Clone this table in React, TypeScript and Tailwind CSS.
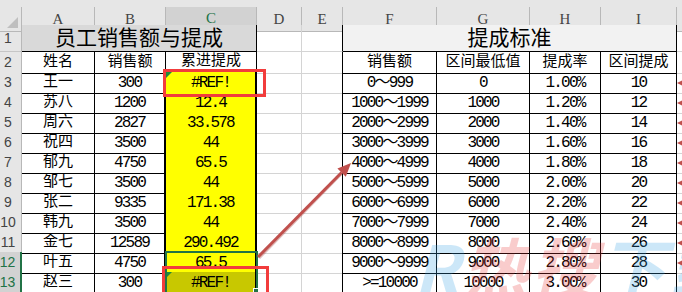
import React from 'react'

const COLS = 'grid grid-cols-[22px_73px_71px_91px_45px_41px_94px_93px_71px_76px_5px]'

const left = [
    ['王一', '300', '#REF!'],
    ['苏八', '1200', '12.4'],
    ['周六', '2827', '33.578'],
    ['祝四', '3500', '44'],
    ['郁九', '4750', '65.5'],
    ['邹七', '3500', '44'],
    ['张二', '9335', '171.38'],
    ['韩九', '3500', '44'],
    ['金七', '12589', '290.492'],
    ['叶五', '4750', '65.5'],
    ['赵三', '300', '#REF!'],
]

const right = [
    ['0～999', '0', '1.00%', '10'],
    ['1000～1999', '1000', '1.20%', '12'],
    ['2000～2999', '2000', '1.40%', '14'],
    ['3000～3999', '3000', '1.60%', '16'],
    ['4000～4999', '4000', '1.80%', '18'],
    ['5000～5999', '5000', '2.00%', '20'],
    ['6000～6999', '6000', '2.20%', '22'],
    ['7000～7999', '7000', '2.40%', '24'],
    ['8000～8999', '8000', '2.60%', '26'],
    ['9000～9999', '9000', '2.80%', '28'],
    ['>=10000', '10000', '3.00%', '30'],
]

const letters = ['A', 'B', 'C', 'D', 'E', 'F', 'G', 'H', 'I']

const cell = 'flex items-center justify-center pt-[1px] whitespace-nowrap overflow-hidden'
const num = 'text-[16px] tracking-[-1.8px]'
const grid = 'border-r border-b border-[#d4d4d4]'
const blk = 'border-r border-b border-black'

function RowHead({ n, active = false }: { n: number; active?: boolean }) {
    return (
        <div
            className={`flex items-center justify-center pr-[5px] border-b border-[#c6c6c6] font-['Liberation_Sans',sans-serif] text-[14px] ${
                active
                    ? 'bg-[#d2d2d2] text-[#217346] border-r-2 border-r-[#217346]'
                    : 'bg-[#e6e6e6] text-[#444] border-r border-r-[#b8b8b8]'
            }`}
        >
            {n}
        </div>
    )
}

export default function App() {
    return (
        <div className="relative w-[682px] h-[292px] overflow-hidden bg-white text-black font-['Liberation_Mono','Noto_Sans_CJK_SC',monospace] text-[15px]">
            <div className="h-[7px] bg-[#e6e6e6]" />

            {/* column headers */}
            <div className={`${COLS} h-[18px]`}>
                <div className="relative bg-[#e6e6e6] border-r border-b border-[#b8b8b8]">
                    <div className="absolute right-[3px] bottom-[3px] w-0 h-0 border-l-[11px] border-l-transparent border-b-[11px] border-b-[#bfbfbf]" />
                </div>
                {letters.map((l) => (
                    <div
                        key={l}
                        className={`flex items-center justify-center font-['Liberation_Serif',serif] text-[15px] border-r border-[#b8b8b8] ${
                            l === 'C'
                                ? 'bg-[#d2d2d2] text-[#217346] border-b-2 border-b-[#217346]'
                                : 'bg-[#e6e6e6] text-[#444] border-b border-b-[#b8b8b8]'
                        }`}
                    >
                        {l}
                    </div>
                ))}
                <div className="bg-[#e6e6e6] border-b border-[#b8b8b8]" />
            </div>

            {/* row 1 */}
            <div className={`${COLS} h-[27px]`}>
                <RowHead n={1} />
                <div className={`col-span-3 ${cell} pt-[3px] bg-[#d9d9d9] text-[21px] ${blk}`}>员工销售额与提成</div>
                <div className={grid} />
                <div className="border-r border-r-black border-b border-b-[#d4d4d4]" />
                <div className={`col-span-4 ${cell} pt-[3px] bg-[#f2f2f2] text-[21px] ${blk}`}>提成标准</div>
                <div className="border-b border-[#d4d4d4]" />
            </div>

            {/* row 2 */}
            <div className={`${COLS} h-[20px]`}>
                <RowHead n={2} />
                <div className={`${cell} ${blk}`}>姓名</div>
                <div className={`${cell} ${blk}`}>销售额</div>
                <div className={`${cell} border-r border-black border-b-2`}>累进提成</div>
                <div className={grid} />
                <div className="border-r border-r-black border-b border-b-[#d4d4d4]" />
                <div className={`${cell} ${blk}`}>销售额</div>
                <div className={`${cell} ${blk}`}>区间最低值</div>
                <div className={`${cell} ${blk}`}>提成率</div>
                <div className={`${cell} ${blk}`}>区间提成</div>
                <div className="border-b border-[#d4d4d4]" />
            </div>

            {left.map((r, i) => {
                const n = i + 3
                const sel = n >= 12
                const last = n === 13
                return (
                    <div key={n} className={`${COLS} ${last ? 'h-[21px]' : 'h-[20px]'}`}>
                        <RowHead n={n} active={sel} />
                        <div className={`${cell} ${blk}`}>{r[0]}</div>
                        <div className={`${cell} ${num} border-b border-black border-r-2`}>{r[1]}</div>
                        <div
                            className={`relative ${cell} ${num} border-r-2 border-b-2 border-black ${
                                last ? 'bg-[#c8c800]' : 'bg-[#ffff00]'
                            }`}
                        >
                            {r[2] === '#REF!' && (
                                <div className="absolute left-0 top-0 w-0 h-0 border-t-[6px] border-t-[#1e8a3c] border-r-[6px] border-r-transparent" />
                            )}
                            {r[2]}
                        </div>
                        <div className={grid} />
                        <div className="border-r border-r-black border-b border-b-[#d4d4d4]" />
                        <div className={`${cell} ${num} ${blk}`}>{right[i][0]}</div>
                        <div className={`${cell} ${num} ${blk}`}>{right[i][1]}</div>
                        <div className={`${cell} ${num} ${blk}`}>{right[i][2]}</div>
                        <div className={`${cell} ${num} ${blk}`}>{right[i][3]}</div>
                        <div className="border-b border-[#d4d4d4]" />
                    </div>
                )
            })}

            {/* selection C12:C13 */}
            <div className="absolute left-[165px] top-[251px] w-[93px] h-[45px] border-2 border-[#217346] pointer-events-none" />
            <div className="absolute left-[253px] top-[288px] w-[6px] h-[6px] bg-[#217346] border border-white" />

            {/* red highlight boxes */}
            <div className="absolute left-[163px] top-[69px] w-[103px] h-[28px] border-[3px] border-[#f23c3c] pointer-events-none" />
            <div className="absolute left-[162px] top-[266px] w-[107px] h-[40px] border-[3px] border-[#f23c3c] pointer-events-none" />

            {/* watermark */}
            <div className="absolute left-[414px] top-[232px] w-[320px] whitespace-nowrap text-[66px] leading-none font-bold italic tracking-[3px] opacity-25 pointer-events-none font-['Noto_Sans_CJK_SC',sans-serif]">
                <span className="text-[#3aa4e6]">R</span>
                <span className="text-[#e83a3a]">热搜</span>
                <span className="text-[#3aa4e6]">下载</span>
            </div>

            <svg className="absolute left-0 top-0 pointer-events-none" width="682" height="292">
                <line x1="259" y1="258" x2="341" y2="174" stroke="#a33d3a" strokeOpacity="0.35" strokeWidth="3" />
                <line x1="258" y1="257" x2="341.6" y2="172.5" stroke="#c0504d" strokeWidth="3" />
                <polygon points="351,163 345.8,176.8 337.4,168.4" fill="#c0504d" />
                {Array.from({ length: 10 }).map((_, k) => (
                    <polygon
                        key={k}
                        points={`677,${83 + 20 * k} 683,${80 + 20 * k} 683,${86 + 20 * k}`}
                        fill="#c0504d"
                    />
                ))}
            </svg>
        </div>
    )
}
